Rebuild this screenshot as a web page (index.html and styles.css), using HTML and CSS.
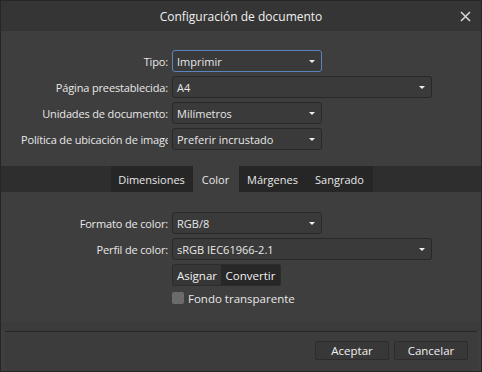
FILE: index.html
```html
<!DOCTYPE html>
<html lang="es">
<head>
  <meta charset="UTF-8">
  <meta name="viewport" content="width=device-width, initial-scale=1.0">
  <title>Configuración de documento</title>
  <link rel="stylesheet" href="styles.css">
</head>
<body>
  <div class="dialog">
    <header class="titlebar">
      <span></span>
      <h1>Configuración de documento</h1>
      <button class="close" aria-label="Cerrar">
        <svg width="11" height="11" viewBox="0 0 11 11"><path d="M1 1L10 10M10 1L1 10" stroke="#d8d8d8" stroke-width="1.5"/></svg>
      </button>
    </header>

    <div class="form top">
      <div class="row">
        <label>Tipo:</label>
        <div class="select focus"><span>Imprimir</span><i class="arrow"></i></div>
      </div>
      <div class="row">
        <label>Página preestablecida:</label>
        <div class="select wide"><span>A4</span><i class="arrow"></i></div>
      </div>
      <div class="row">
        <label>Unidades de documento:</label>
        <div class="select"><span>Milímetros</span><i class="arrow"></i></div>
      </div>
      <div class="row">
        <label>Política de ubicación de image</label>
        <div class="select"><span>Preferir incrustado</span><i class="arrow"></i></div>
      </div>
    </div>

    <nav class="tabbar">
      <div class="tabs">
        <span class="tab t-dim">Dimensiones</span>
        <span class="tab t-col active">Color</span>
        <span class="tab t-mar">Márgenes</span>
        <span class="tab t-san">Sangrado</span>
      </div>
    </nav>

    <div class="form color">
      <div class="row">
        <label>Formato de color:</label>
        <div class="select"><span>RGB/8</span><i class="arrow"></i></div>
      </div>
      <div class="row">
        <label>Perfil de color:</label>
        <div class="select wide"><span>sRGB IEC61966-2.1</span><i class="arrow"></i></div>
      </div>
      <div class="row">
        <label></label>
        <div class="segmented">
          <button class="seg">Asignar</button>
          <button class="seg dark">Convertir</button>
        </div>
      </div>
      <div class="row check-row">
        <label></label>
        <span class="checkbox"></span>
        <span class="check-label">Fondo transparente</span>
      </div>
    </div>

    <div class="spacer"></div>

    <footer class="footer">
      <button class="btn">Aceptar</button>
      <button class="btn">Cancelar</button>
    </footer>
  </div>
</body>
</html>
```

FILE: styles.css
```css
body {
  margin: 0;
  background-color: #2a2a2a;
  font-family: "Open Sans", "Noto Sans", sans-serif;
  font-size: 11px;
  color: #e8e8e8;
}
.dialog {
  width: 480px;
  height: 370px;
  border: 1px solid #262626;
  background-color: #3e3e3e;
  display: flex;
  flex-direction: column;
}
.titlebar {
  height: 30px;
  background-color: #353535;
  display: grid;
  grid-template-columns: 1fr auto 1fr;
  align-items: center;
}
.titlebar h1 {
  margin: 0;
  font-size: 12px;
  font-weight: normal;
  color: #f0f0f0;
}
.close {
  justify-self: end;
  margin-right: 10px;
  background: none;
  border: none;
  padding: 0;
  width: 11px;
  height: 11px;
  display: flex;
}
.form {
  display: flex;
  flex-direction: column;
  gap: 4px;
}
.form.top {
  padding-top: 19px;
}
.form.color {
  padding-top: 20px;
}
.row {
  display: flex;
  align-items: center;
  height: 22px;
}
.row label {
  width: 147px;
  margin-left: 20px;
  margin-right: 4px;
  text-align: right;
  white-space: nowrap;
  overflow: hidden;
  letter-spacing: -0.15px;
}
.select {
  width: 138px;
  height: 20px;
  border: 1px solid #282828;
  border-radius: 3px;
  background-color: #3a3a3a;
  display: flex;
  align-items: center;
  justify-content: space-between;
  padding: 0 6px 0 4px;
}
.select.wide {
  width: 248px;
}
.select.focus {
  border-color: #5b84bd;
}
.arrow {
  width: 0;
  height: 0;
  border-left: 3px solid transparent;
  border-right: 3px solid transparent;
  border-top: 3px solid #f0f0f0;
}
.tabbar {
  margin-top: 16px;
  height: 26px;
  background-color: #2e2e2e;
  display: flex;
  justify-content: center;
}
.tabs {
  display: flex;
  background-color: #262626;
  margin-left: 1px;
}
.tab {
  display: flex;
  align-items: center;
  justify-content: center;
  font-size: 11px;
}
.t-dim { width: 82px; }
.t-col { width: 46px; }
.t-mar { width: 68px; }
.t-san { width: 66px; }
.tab.active {
  background-color: #3e3e3e;
}
.segmented {
  display: flex;
  height: 22px;
  border: 1px solid #2c2c2c;
  border-radius: 2px;
  overflow: hidden;
  box-sizing: border-box;
}
.seg {
  font: inherit;
  font-size: 11.5px;
  color: #f0f0f0;
  border: none;
  background-color: #363636;
  padding: 0;
  width: 48px;
}
.seg.dark {
  width: 59px;
  background-color: #272727;
}
.check-row {
  height: 16px;
}
.checkbox {
  width: 12px;
  height: 12px;
  border-radius: 2px;
  background-color: #6b6b6b;
  margin-right: 4px;
}
.check-label {
  font-size: 11.5px;
}
.spacer {
  flex: 1;
  background: linear-gradient(#3e3e3e 0, #3e3e3e calc(100% - 9px), #3b3b3b calc(100% - 9px));
}
.footer {
  margin: 0 4px;
  border-top: 1px solid #262626;
  padding: 9px 9px 11px 0;
  display: flex;
  justify-content: flex-end;
  gap: 5px;
  background-color: #3c3c3c;
}
.btn {
  font: inherit;
  font-size: 11.5px;
  color: #f0f0f0;
  width: 74px;
  height: 19px;
  padding: 0;
  border: 1px solid #2c2c2c;
  border-radius: 2px;
  background-color: #383838;
}
```
